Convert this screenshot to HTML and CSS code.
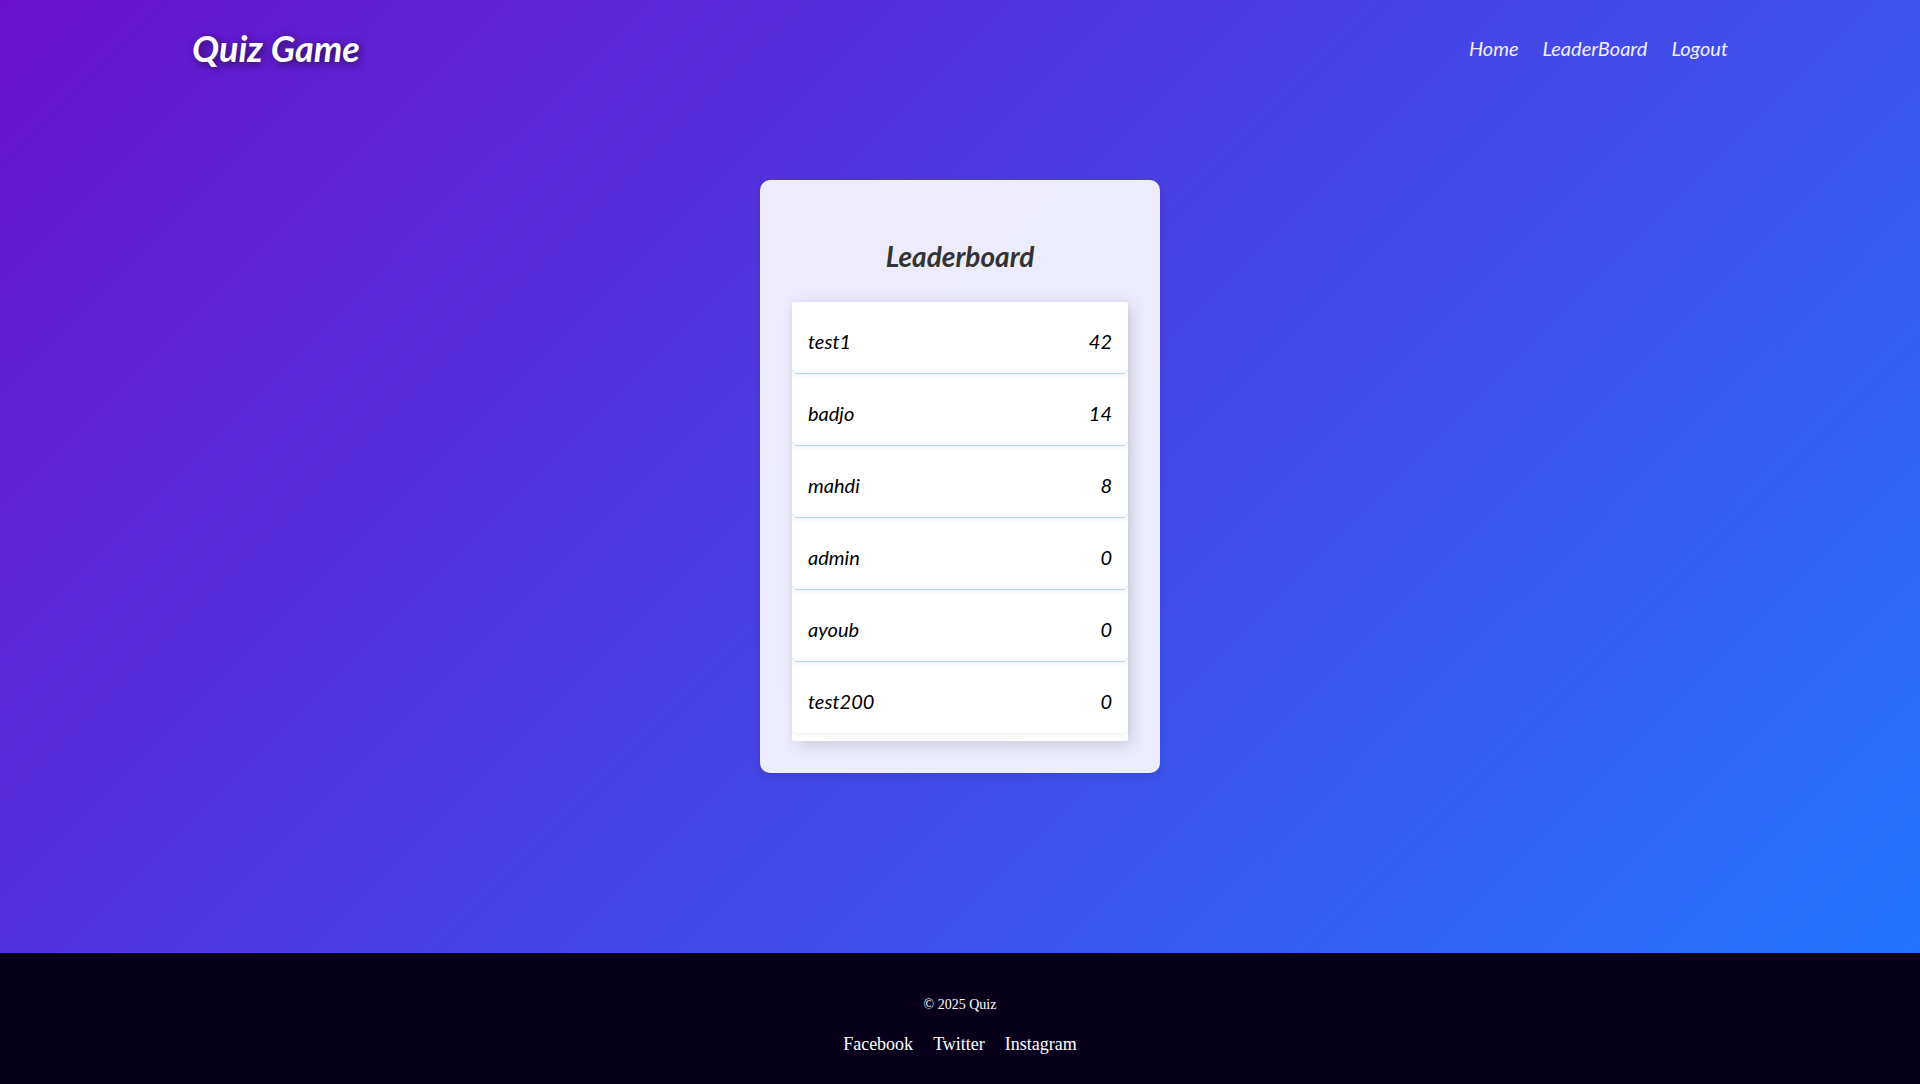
FILE: index.html
```
<!DOCTYPE html>
<html lang="en">
<head>
  <meta charset="utf-8">
  <meta name="viewport" content="width=device-width, initial-scale=1">
  <title>Quiz Game</title>
  <link rel="stylesheet" href="styles.css">
</head>
<body>
  <div class="page">
    <header class="header">
      <h1 class="logo">Quiz Game</h1>
      <nav class="nav">
        <a class="nav-link" href="#">Home</a>
        <a class="nav-link" href="#">LeaderBoard</a>
        <a class="nav-link" href="#">Logout</a>
      </nav>
    </header>
    <main class="main">
      <section class="card">
        <h2 class="card-title" id="board-title">Leaderboard</h2>
        <table class="board" aria-labelledby="board-title">
          <tbody class="board-body">
            <tr class="row"><td>test1</td><td>42</td></tr>
            <tr class="row"><td>badjo</td><td>14</td></tr>
            <tr class="row"><td>mahdi</td><td>8</td></tr>
            <tr class="row"><td>admin</td><td>0</td></tr>
            <tr class="row"><td>ayoub</td><td>0</td></tr>
            <tr class="row"><td>test200</td><td>0</td></tr>
          </tbody>
        </table>
      </section>
    </main>
  </div>
  <footer class="footer">
    <p class="copyright">© 2025 Quiz</p>
    <div class="social">
      <a class="social-link" href="#">Facebook</a>
      <a class="social-link" href="#">Twitter</a>
      <a class="social-link" href="#">Instagram</a>
    </div>
  </footer>
</body>
</html>
```

FILE: styles.css
```
* {
  box-sizing: border-box;
  margin: 0;
  padding: 0;
}

body {
  display: flex;
  flex-direction: column;
  min-height: 100vh;
  font-family: Lato, sans-serif;
  font-style: italic;
}

.page {
  flex: 1;
  display: flex;
  flex-direction: column;
  background: linear-gradient(135deg, #6a11cb, #2575fc);
}

.header {
  display: flex;
  justify-content: space-between;
  align-items: center;
  padding: 24px 10%;
}

.logo {
  font-size: 36px;
  line-height: 48px;
  font-weight: 700;
  color: #fff;
  text-shadow: 2px 2px 8px rgba(0, 0, 0, 0.6);
}

.nav {
  display: flex;
  gap: 24px;
}

.nav-link {
  font-size: 20px;
  line-height: 32px;
  color: #f0f0ff;
  text-decoration: none;
}

.main {
  flex: 1;
  display: flex;
  justify-content: center;
  align-items: flex-start;
  padding: 84px 16px;
}

.card {
  width: 100%;
  max-width: 400px;
  padding: 32px;
  border-radius: 10px;
  background: rgba(255, 255, 255, 0.9);
  box-shadow: 0 4px 8px rgba(0, 0, 0, 0.1);
}

.card-title {
  padding: 20px 0 22px;
  font-size: 28px;
  line-height: 48px;
  font-weight: 700;
  text-align: center;
  color: #333;
}

.board {
  display: block;
  padding-bottom: 8px;
  border-radius: 2px;
  background: #fff;
  box-shadow: 4px 4px 16px rgba(0, 0, 0, 0.15);
}

.board-body {
  display: block;
}

.row {
  display: flex;
  justify-content: space-between;
  padding: 23px 16px 16px;
  border-bottom: 1px solid lightblue;
  border-radius: 5px;
  box-shadow: 0 2px 4px rgba(0, 0, 0, 0.05);
  font-size: 20px;
  line-height: 32px;
  color: #000;
}

.row:last-child {
  border-bottom: 0;
}

.footer {
  padding: 40px 16px 28px;
  background: #08001a;
  color: #fff;
  font-family: "Liberation Serif", serif;
  font-style: normal;
  text-align: center;
}

.copyright {
  margin-bottom: 15px;
  font-size: 14px;
  line-height: 24px;
}

.social {
  display: flex;
  justify-content: center;
  gap: 20px;
}

.social-link {
  font-size: 18px;
  line-height: 24px;
  color: #fff;
  text-decoration: none;
}
```
